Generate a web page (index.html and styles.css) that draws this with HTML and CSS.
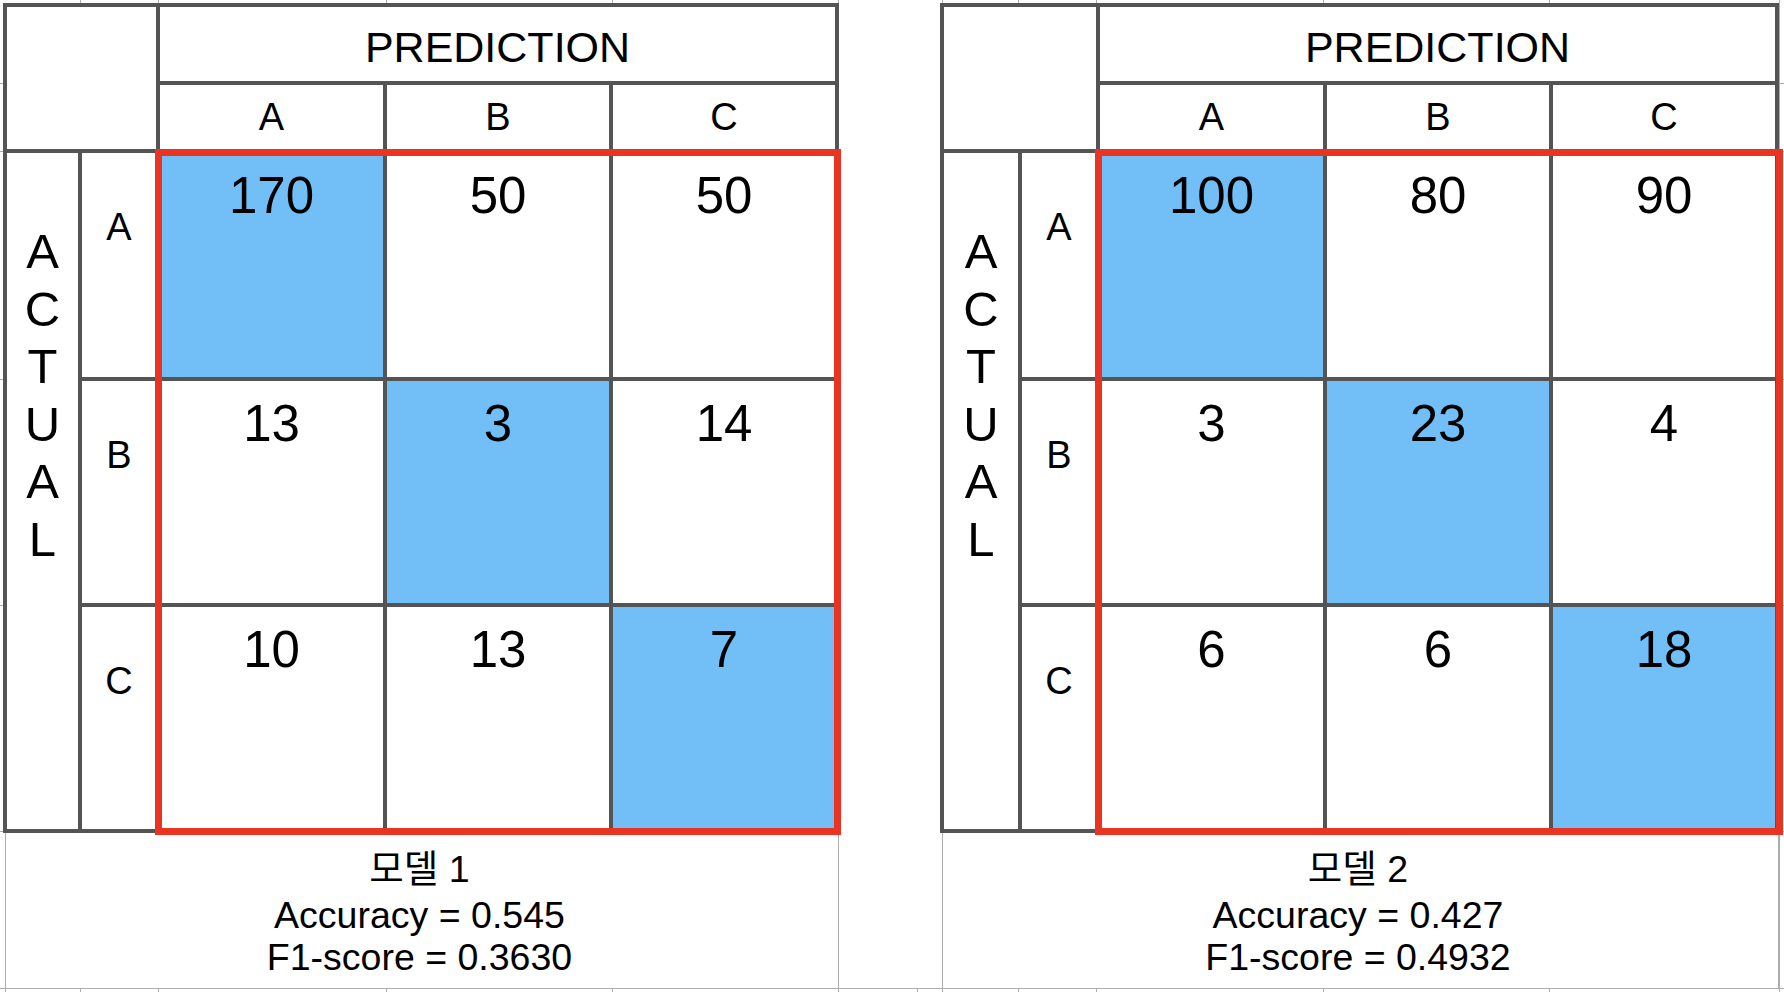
FILE: index.html
```html
<!DOCTYPE html>
<html lang="ko">
<head>
<meta charset="utf-8">
<title>Confusion matrices</title>
<link rel="stylesheet" href="styles.css">
</head>
<body>
<div class="sheet">
  <section class="model">
    <div class="matrix">
      <div class="cell corner"></div>
      <div class="cell pred">PREDICTION</div>
      <div class="cell colh">A</div>
      <div class="cell colh">B</div>
      <div class="cell colh">C</div>
      <div class="cell actual"><span class="actual-text">ACTUAL</span></div>
      <div class="cell rowh">A</div>
      <div class="cell val hit">170</div>
      <div class="cell val">50</div>
      <div class="cell val">50</div>
      <div class="cell rowh">B</div>
      <div class="cell val">13</div>
      <div class="cell val hit">3</div>
      <div class="cell val">14</div>
      <div class="cell rowh">C</div>
      <div class="cell val">10</div>
      <div class="cell val">13</div>
      <div class="cell val hit">7</div>
      <div class="frame"></div>
    </div>
    <div class="caption">
      <div class="cap-title">모델 1</div>
      <div class="cap-line">Accuracy = 0.545</div>
      <div class="cap-line">F1-score = 0.3630</div>
    </div>
  </section>
  <div class="gap"></div>
  <section class="model model-2">
    <div class="matrix">
      <div class="cell corner"></div>
      <div class="cell pred">PREDICTION</div>
      <div class="cell colh">A</div>
      <div class="cell colh">B</div>
      <div class="cell colh">C</div>
      <div class="cell actual"><span class="actual-text">ACTUAL</span></div>
      <div class="cell rowh">A</div>
      <div class="cell val hit">100</div>
      <div class="cell val">80</div>
      <div class="cell val">90</div>
      <div class="cell rowh">B</div>
      <div class="cell val">3</div>
      <div class="cell val hit">23</div>
      <div class="cell val">4</div>
      <div class="cell rowh">C</div>
      <div class="cell val">6</div>
      <div class="cell val">6</div>
      <div class="cell val hit">18</div>
      <div class="frame"></div>
    </div>
    <div class="caption">
      <div class="cap-title">모델 2</div>
      <div class="cap-line">Accuracy = 0.427</div>
      <div class="cap-line">F1-score = 0.4932</div>
    </div>
  </section>
</div>
</body>
</html>
```
FILE: styles.css
```css
* {
  box-sizing: border-box;
}

html,
body {
  margin: 0;
  padding: 0;
  background: #ffffff;
}

body {
  font-family: "Liberation Sans", Arial, "Noto Sans CJK KR", sans-serif;
  color: #000000;
}

/* spreadsheet canvas with faint grid lines */
.sheet {
  width: 1784px;
  height: 992px;
  overflow: hidden;
  display: flex;
  align-items: flex-start;
  padding: 3px 0 0 3px;
  background-color: #ffffff;
  background-repeat: no-repeat;
  background-image:
    linear-gradient(#adadad, #adadad),
    linear-gradient(#adadad, #adadad),
    linear-gradient(#adadad, #adadad),
    linear-gradient(#adadad, #adadad),
    linear-gradient(#adadad, #adadad),
    linear-gradient(#adadad, #adadad),
    linear-gradient(#adadad, #adadad),
    linear-gradient(#adadad, #adadad),
    linear-gradient(#adadad, #adadad),
    linear-gradient(#adadad, #adadad),
    linear-gradient(#adadad, #adadad),
    linear-gradient(#adadad, #adadad),
    linear-gradient(#adadad, #adadad),
    linear-gradient(#adadad, #adadad),
    linear-gradient(#adadad, #adadad),
    linear-gradient(#adadad, #adadad),
    linear-gradient(#adadad, #adadad),
    linear-gradient(#adadad, #adadad),
    linear-gradient(#adadad, #adadad);
  background-size:
    1px 100%, 1px 100%, 1px 100%, 1px 100%, 1px 100%, 1px 100%,
    1px 100%, 1px 100%, 1px 100%, 1px 100%, 1px 100%,
    100% 1px, 100% 1px, 100% 1px, 100% 1px, 100% 1px, 100% 1px,
    1px 4px, 1px 4px;
  background-position:
    80px 0, 158px 0, 386px 0, 612px 0, 838px 0, 942px 0,
    1018px 0, 1096px 0, 1323px 0, 1549px 0, 1779px 0,
    0 83px, 0 151px, 0 379px, 0 605px, 0 831px, 0 988px,
    917px 988px, 5px 988px;
}

.model {
  flex: none;
}

.gap {
  flex: none;
  width: 101px;
  height: 985px;
  background: #ffffff;
}

/* the matrix: dark background shows through the gaps as cell borders */
.matrix {
  position: relative;
  display: grid;
  gap: 4px;
  padding: 4px;
  background: #545454;
  grid-template-columns: 71px 74px 223px 222px 222px;
  grid-template-rows: 74px 64px 224px 222px 222px;
}

.model-2 .matrix {
  grid-template-columns: 74px 74px 223px 222px 222px;
}

.cell {
  background: #ffffff;
  text-align: center;
}

.corner {
  grid-area: 1 / 1 / 3 / 3;
}

.pred {
  grid-area: 1 / 3 / 2 / 6;
  font-size: 43px;
  line-height: 43px;
  padding-top: 19px;
}

.colh {
  font-size: 38px;
  line-height: 38px;
  padding-top: 13px;
}

.actual {
  grid-area: 3 / 1 / 6 / 2;
  display: flex;
  justify-content: center;
  align-items: flex-start;
  padding-top: 70px;
}

.actual-text {
  width: 40px;
  word-break: break-all;
  text-align: center;
  font-size: 49px;
  line-height: 57.5px;
}

.rowh {
  font-size: 38px;
  line-height: 38px;
  padding-top: 55px;
}

.val {
  font-size: 51px;
  line-height: 51px;
  padding-top: 17px;
}

.cell.hit {
  background: #72bff8;
}

/* red outline drawn over the value block */
.frame {
  position: absolute;
  left: 152px;
  top: 146px;
  width: 686px;
  height: 686px;
  border: 7px solid #e93323;
  pointer-events: none;
}

.model-2 .frame {
  left: 155px;
  width: 688px;
}

.caption {
  margin-left: 2px;
  height: 156px;
  background: #ffffff;
  border-left: 1px solid #adadad;
  border-right: 1px solid #adadad;
  border-bottom: 1px solid #adadad;
  padding: 11px 5px 0 0;
  text-align: center;
  font-size: 37.5px;
}

.cap-title {
  line-height: 50px;
}

.cap-line {
  line-height: 42px;
}
```
